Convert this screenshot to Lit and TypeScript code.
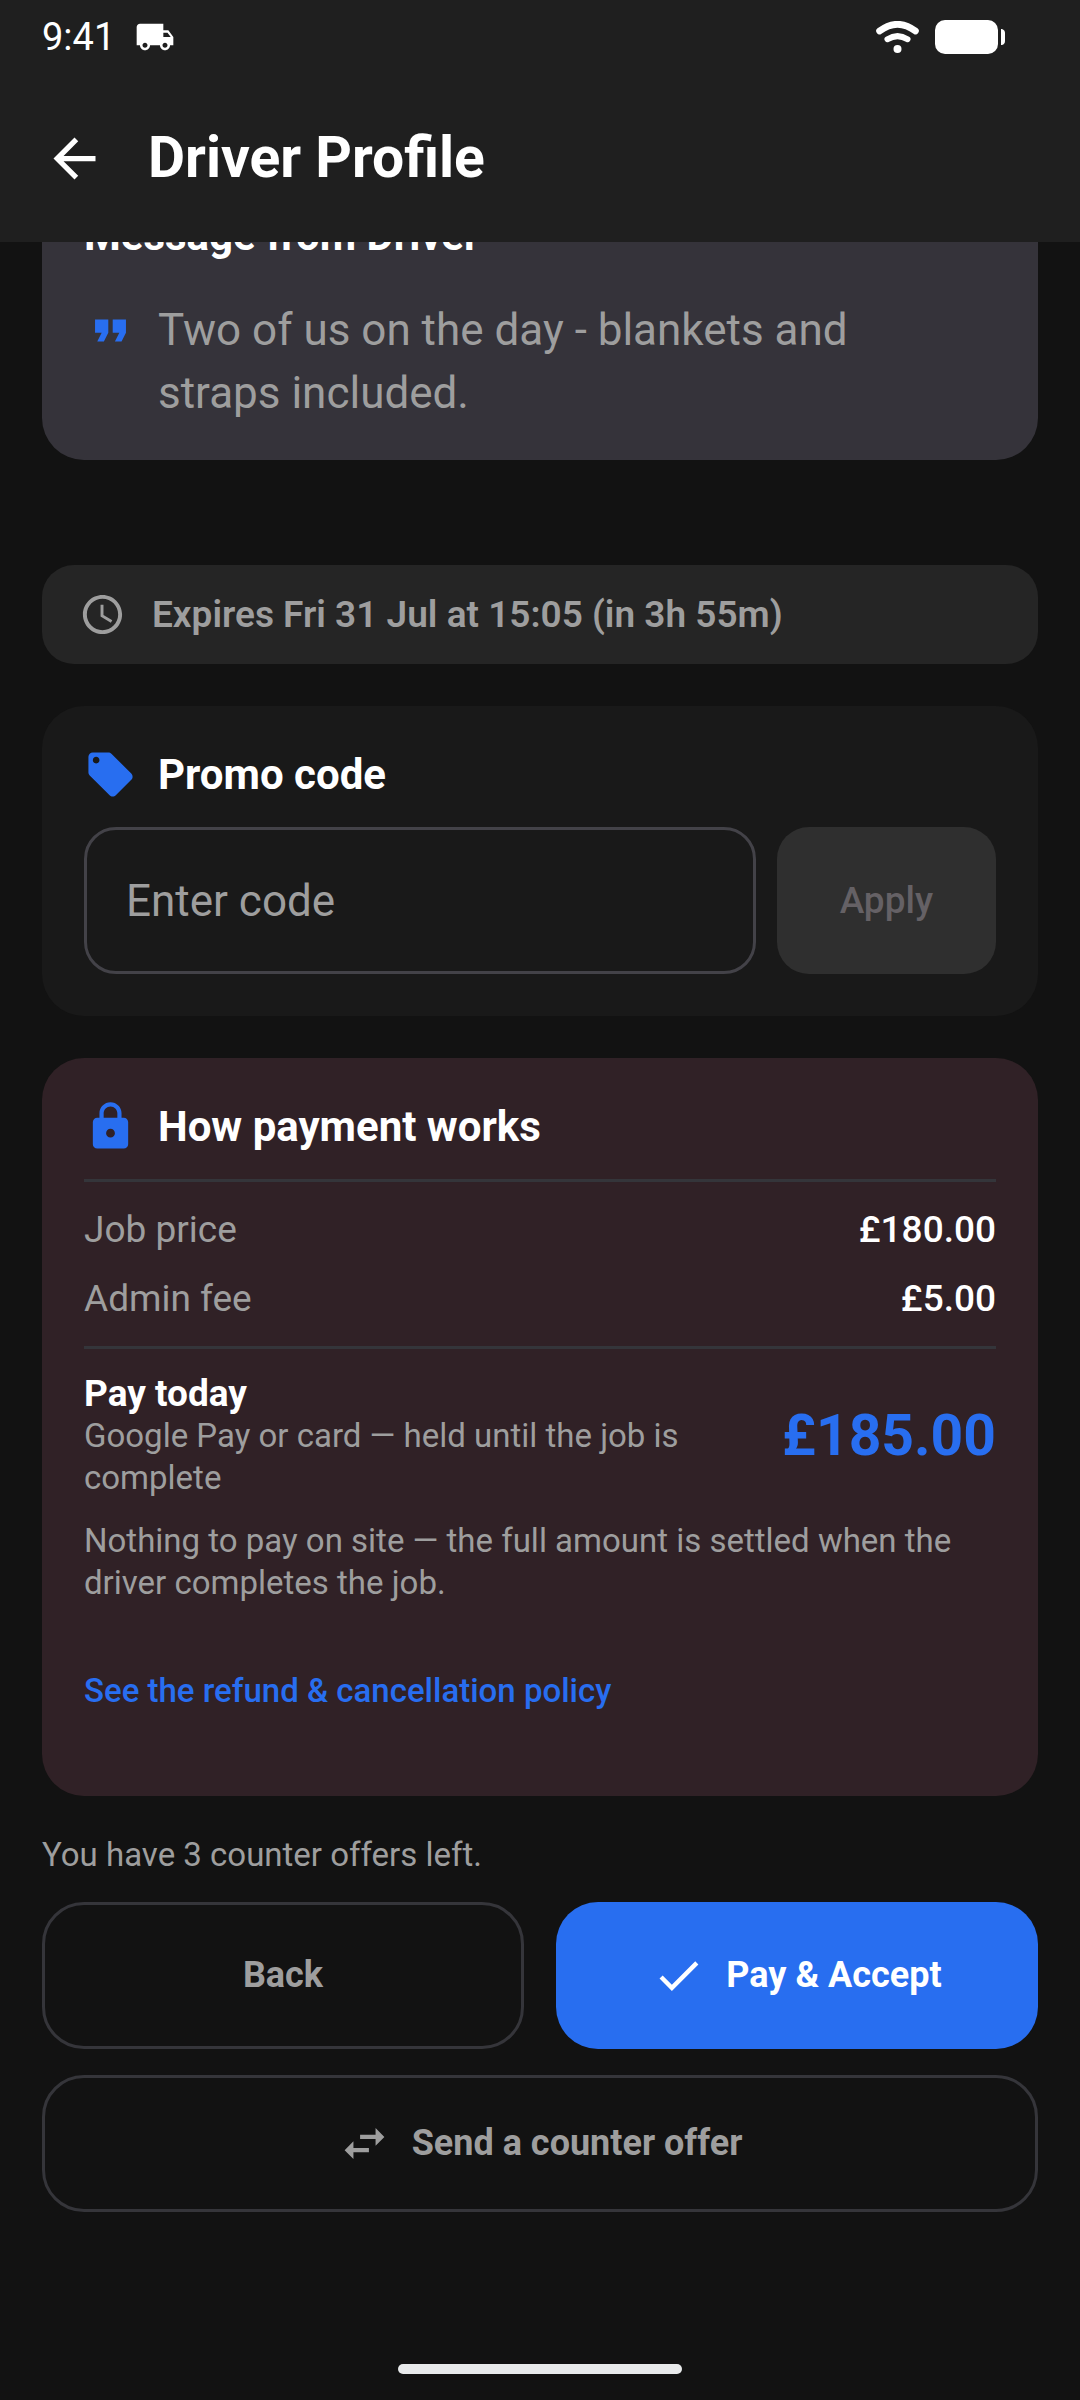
import { LitElement, html, css, svg } from "lit";
import { customElement, state } from "lit/decorators.js";

const icons = {
  truck: svg`<path d="M20 8h-3V4H3c-1.1 0-2 .9-2 2v11h2c0 1.66 1.34 3 3 3s3-1.34 3-3h6c0 1.66 1.34 3 3 3s3-1.34 3-3h2v-5l-3-4zM6 18.5c-.83 0-1.5-.67-1.5-1.5s.67-1.5 1.5-1.5 1.5.67 1.5 1.5-.67 1.5-1.5 1.5zm13.5-9l1.96 2.5H17V9.5h2.5zm-1.5 9c-.83 0-1.5-.67-1.5-1.5s.67-1.5 1.5-1.5 1.5.67 1.5 1.5-.67 1.5-1.5 1.5z"/>`,
  back: svg`<path d="M20 11H7.83l5.59-5.59L12 4l-8 8 8 8 1.41-1.41L7.83 13H20v-2z"/>`,
  quote: svg`<path d="M6 17h3l2-4V7H5v6h3zm8 0h3l2-4V7h-6v6h3z"/>`,
  clock: svg`<path d="M11.99 2C6.47 2 2 6.48 2 12s4.47 10 9.99 10C17.52 22 22 17.52 22 12S17.52 2 11.99 2zM12 20c-4.42 0-8-3.58-8-8s3.58-8 8-8 8 3.58 8 8-3.58 8-8 8zm.5-13H11v6l5.25 3.15.75-1.23-4.5-2.67z"/>`,
  tag: svg`<path d="M21.41 11.58l-9-9C12.05 2.22 11.55 2 11 2H4c-1.1 0-2 .9-2 2v7c0 .55.22 1.05.59 1.42l9 9c.36.36.86.58 1.41.58s1.05-.22 1.41-.59l7-7c.37-.36.59-.86.59-1.41s-.23-1.06-.59-1.42zM5.5 7C4.67 7 4 6.33 4 5.5S4.67 4 5.5 4 7 4.67 7 5.5 6.33 7 5.5 7z"/>`,
  lock: svg`<path d="M18 8h-1V6c0-2.76-2.24-5-5-5S7 3.24 7 6v2H6c-1.1 0-2 .9-2 2v10c0 1.1.9 2 2 2h12c1.1 0 2-.9 2-2V10c0-1.1-.9-2-2-2zm-6 9c-1.1 0-2-.9-2-2s.9-2 2-2 2 .9 2 2-.9 2-2 2zm3.1-9H8.9V6c0-1.71 1.39-3.1 3.1-3.1 1.71 0 3.1 1.39 3.1 3.1v2z"/>`,
  check: svg`<path d="M9 16.17L4.83 12l-1.42 1.41L9 19 21 7l-1.41-1.41z"/>`,
  swap: svg`<path d="M6.99 11L3 15l3.99 4v-3H14v-2H6.99v-3zM21 9l-3.99-4v3H10v2h7.01v3L21 9z"/>`,
};

const icon = (name: keyof typeof icons, cls: string) =>
  html`<svg class="icon ${cls}" viewBox="0 0 24 24" aria-hidden="true">${icons[name]}</svg>`;

@customElement("app-root")
export class AppRoot extends LitElement {
  @state() private code = "";

  static styles = css`
    :host {
      display: flex;
      flex-direction: column;
      min-height: 100vh;
      box-sizing: border-box;
      background: #121212;
      color: #fff;
      font-family: Roboto, "Noto Sans", sans-serif;
      font-size: 37px;
      line-height: 53px;
    }
    *, *::before, *::after { box-sizing: border-box; }
    h1, h2, p, dl, dd { margin: 0; }
    button, input { font: inherit; color: inherit; }
    button { cursor: pointer; }

    .icon { display: block; flex: none; fill: currentColor; }
    .s { width: 40px; height: 40px; }
    .m { width: 47px; height: 47px; }
    .l { width: 53px; height: 53px; }
    .xl { width: 63px; height: 63px; }

    .top { position: relative; z-index: 1; background: #1f1f1f; }
    .status {
      display: flex;
      align-items: center;
      gap: 20px;
      height: 74px;
      padding: 0 75px 0 42px;
      font-size: 38px;
    }
    .signals { display: flex; align-items: center; gap: 16px; margin-left: auto; }
    .wifi { display: block; width: 43px; height: 32px; fill: none; stroke: #fff; stroke-linecap: round; }
    .battery { display: block; width: 70px; height: 34px; fill: #fff; }
    .bar { display: flex; align-items: center; gap: 42px; height: 168px; padding: 0 43px; }
    .back { display: flex; padding: 0; border: 0; background: none; }
    .bar h1 { font-size: 57px; line-height: 74px; font-weight: 700; }

    main { display: flex; flex-direction: column; gap: 42px; padding: 0 42px; overflow: hidden; }
    .card { padding: 42px; border-radius: 42px; }
    .title {
      display: flex;
      align-items: center;
      gap: 21px;
      font-size: 42px;
      line-height: 53px;
      font-weight: 700;
    }
    .muted { color: #9e9e9e; }

    .message { margin: -80px 0 63px; padding-bottom: 35px; background: #35333a; }
    .message .title { line-height: 63px; }
    .quote { display: flex; gap: 21px; margin-top: 32px; padding-right: 42px; font-size: 44px; line-height: 63px; }
    .quote .icon, .title .icon { color: #286ef0; }
    .quote .icon { margin-top: 5px; }

    .expires {
      display: flex;
      align-items: center;
      gap: 26px;
      padding: 23px 37px;
      border-radius: 32px;
      background: #252525;
      font-weight: 600;
    }

    .promo { background: #191919; }
    .entry { display: flex; gap: 21px; margin-top: 26px; }
    .entry input {
      flex: 1;
      min-width: 0;
      height: 147px;
      padding: 0 39px;
      border: 3px solid #434248;
      border-radius: 32px;
      background: none;
      font-size: 44px;
    }
    .entry input::placeholder { color: #9e9e9e; opacity: 1; }
    .apply {
      padding: 0 63px;
      border: 0;
      border-radius: 32px;
      background: #2f2f2f;
      font-weight: 500;
    }
    .apply:disabled { color: #656165; }

    .payment { background: #302126; }
    .rows { display: grid; gap: 16px; margin: 26px 0 24px; padding: 21px 0; border: solid #34353a; border-width: 3px 0; }
    .row { display: flex; justify-content: space-between; gap: 21px; }
    .row dd { font-weight: 500; }
    .today { display: flex; align-items: center; justify-content: space-between; gap: 42px; }
    .today h2 { font-size: 37px; line-height: 42px; font-weight: 700; }
    .total { font-size: 57px; line-height: 74px; font-weight: 700; color: #286ef0; }
    .small { font-size: 33px; line-height: 42px; }
    .note { margin-top: 21px; }
    .policy {
      display: flex;
      align-items: center;
      width: fit-content;
      min-height: 126px;
      margin-top: 24px;
      color: #286ef0;
      font-weight: 500;
      text-decoration: none;
    }

    .actions { display: grid; grid-template-columns: 1fr 1fr; gap: 26px 32px; padding: 38px 42px 0; }
    .left, .counter { grid-column: 1 / -1; }
    .action {
      display: flex;
      align-items: center;
      justify-content: center;
      gap: 21px;
      min-height: 147px;
      border: 3px solid #35353a;
      border-radius: 42px;
      background: none;
      color: #9e9e9e;
      font-size: 36px;
      font-weight: 700;
    }
    .pay { border: 0; background: #286ef0; color: #fff; }
    .counter { min-height: 137px; }
    .home { width: 284px; height: 10px; margin: auto auto 26px; border-radius: 5px; background: #e8eaeb; }
  `;

  render() {
    return html`
      <header class="top">
        <div class="status">
          <span>9:41</span>
          ${icon("truck", "s")}
          <div class="signals">
            <svg class="wifi" viewBox="0 0 43 32" aria-hidden="true">
              <path d="M3.5 10Q21.5 -3.5 39.5 10" stroke-width="6.6" />
              <path d="M11.5 18.2Q21.5 12 31.5 18.2" stroke-width="6" />
              <circle cx="21.5" cy="28" r="4" fill="#fff" stroke="none" />
            </svg>
            <svg class="battery" viewBox="0 0 70 34" aria-hidden="true">
              <rect width="63" height="34" rx="10" />
              <path d="M66 9h1q3 1 3 4v8q0 3-3 4h-1z" />
            </svg>
          </div>
        </div>
        <div class="bar">
          <button class="back" type="button" aria-label="Back">${icon("back", "xl")}</button>
          <h1>Driver Profile</h1>
        </div>
      </header>

      <main>
        <section class="card message">
          <h2 class="title">Message from Driver</h2>
          <div class="quote">
            ${icon("quote", "l")}
            <p class="muted">Two of us on the day - blankets and straps included.</p>
          </div>
        </section>

        <p class="expires muted">${icon("clock", "m")}<span>Expires Fri 31 Jul at 15:05 (in 3h 55m)</span></p>

        <section class="card promo">
          <label class="title" for="code">${icon("tag", "l")}<span>Promo code</span></label>
          <div class="entry">
            <input
              id="code"
              type="text"
              placeholder="Enter code"
              .value=${this.code}
              @input=${(e: Event) => (this.code = (e.target as HTMLInputElement).value)}
            />
            <button class="apply" type="button" ?disabled=${!this.code}>Apply</button>
          </div>
        </section>

        <section class="card payment">
          <h2 class="title">${icon("lock", "l")}<span>How payment works</span></h2>
          <dl class="rows">
            <div class="row"><dt class="muted">Job price</dt><dd>£180.00</dd></div>
            <div class="row"><dt class="muted">Admin fee</dt><dd>£5.00</dd></div>
          </dl>
          <div class="today">
            <div>
              <h2>Pay today</h2>
              <p class="small muted">Google Pay or card — held until the job is complete</p>
            </div>
            <span class="total">£185.00</span>
          </div>
          <p class="small muted note">
            Nothing to pay on site — the full amount is settled when the driver completes the job.
          </p>
          <a class="policy small" href="#refund-policy">See the refund &amp; cancellation policy</a>
        </section>
      </main>

      <footer class="actions">
        <p class="left small muted">You have 3 counter offers left.</p>
        <button class="action" type="button">Back</button>
        <button class="action pay" type="button">${icon("check", "l")}<span>Pay &amp; Accept</span></button>
        <button class="action counter" type="button">${icon("swap", "l")}<span>Send a counter offer</span></button>
      </footer>
      <div class="home"></div>
    `;
  }
}
